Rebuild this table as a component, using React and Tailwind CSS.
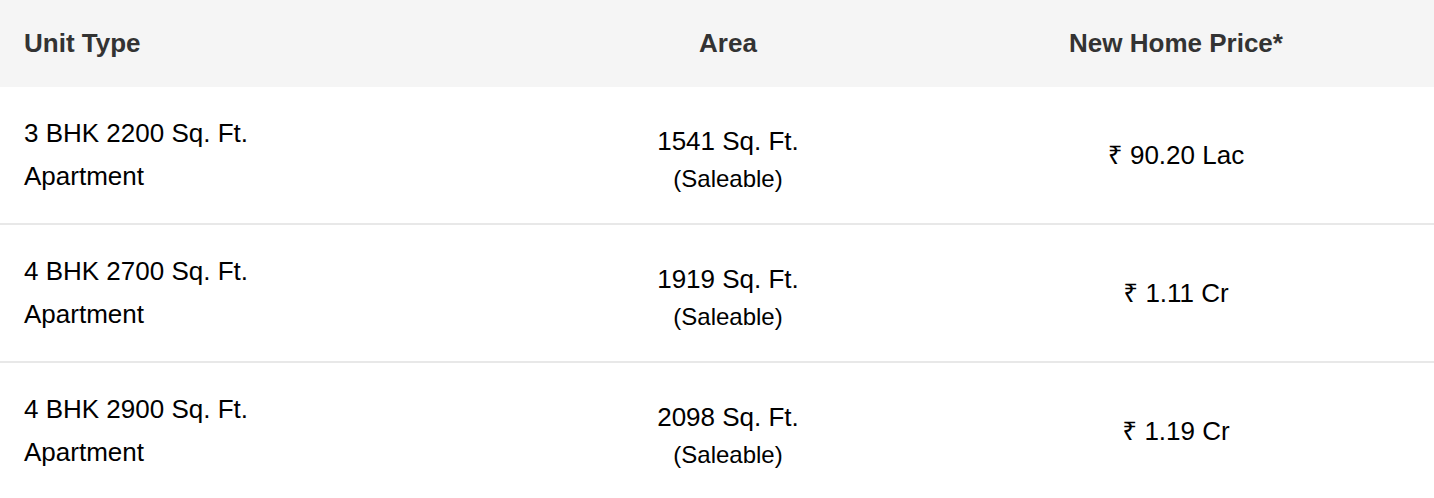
import React from "react";

const units = [
  { type: "3 BHK 2200 Sq. Ft.", sub: "Apartment", area: "1541 Sq. Ft.", price: "₹ 90.20 Lac" },
  { type: "4 BHK 2700 Sq. Ft.", sub: "Apartment", area: "1919 Sq. Ft.", price: "₹ 1.11 Cr" },
  { type: "4 BHK 2900 Sq. Ft.", sub: "Apartment", area: "2098 Sq. Ft.", price: "₹ 1.19 Cr" },
];

export default function App() {
  return (
    <div
      className="w-[1434px] bg-white text-black"
      style={{ fontFamily: '"Liberation Sans", "Noto Sans", "DejaVu Sans", sans-serif' }}
    >
      {/* header */}
      <div className="grid grid-cols-[538px_380px_516px] h-[87px] items-center bg-[#f5f5f5] text-[#333] text-[26px] font-bold">
        <div className="px-6">Unit Type</div>
        <div className="text-center">Area</div>
        <div className="text-center">New Home Price*</div>
      </div>

      {units.map((u, i) => (
        <div
          key={i}
          className="grid grid-cols-[538px_380px_516px] h-[138px] items-center border-b-2 border-[#e8e8e8] text-[26px]"
        >
          <div className="px-6 leading-[43px]">
            <div>{u.type}</div>
            <div>{u.sub}</div>
          </div>
          <div className="text-center pt-[10px]">
            <div className="leading-[34px]">{u.area}</div>
            <div className="mt-1 text-[24px] leading-[34px]">(Saleable)</div>
          </div>
          <div className="text-center">{u.price}</div>
        </div>
      ))}
    </div>
  );
}
